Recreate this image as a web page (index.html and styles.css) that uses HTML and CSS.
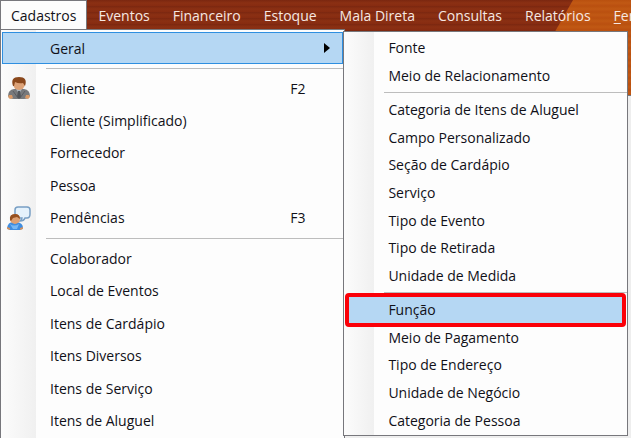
FILE: index.html
```
<!DOCTYPE html>
<html lang="pt-BR">
<head>
<meta charset="UTF-8">
<meta name="viewport" content="width=device-width, initial-scale=1.0">
<title>Cadastros</title>
<link rel="stylesheet" href="styles.css">
</head>
<body>

<header class="app-header">
  <nav class="menubar">
    <button class="active">Cadastros</button>
    <button>Eventos</button>
    <button>Financeiro</button>
    <button>Estoque</button>
    <button>Mala Direta</button>
    <button>Consultas</button>
    <button>Relatórios</button>
    <button><u>F</u>er</button>
  </nav>
</header>

<div class="dropdowns">
  <!-- Menu Cadastros -->
  <div class="menu main-menu">
    <div class="group single">
      <button class="item selected"><span>Geral</span><svg class="arrow" viewBox="0 0 6 10"><path d="M0 0L6 5L0 10Z"/></svg></button>
    </div>
    <hr>
    <div class="group five">
      <button class="item">
        <svg class="icon" viewBox="0 0 24 24">
          <path d="M1 20Q1 14 7 13L17 13Q23 14 23 20Q22 23 17 23H7Q2 23 1 20Z" fill="#77797c"/>
          <path d="M2 19Q0 21 3 23L6 22L5 19ZM22 19Q24 21 21 23L18 22L19 19Z" fill="#d99a67"/>
          <path d="M9 13L12 18L15 13Z" fill="#a9b2bb"/>
          <path d="M11 15H13L14 21L12 23L10 21Z" fill="#505358"/>
          <path d="M6 15L11 22M18 15L13 22" stroke="#5a5c61" fill="none"/>
          <ellipse cx="12" cy="8" rx="6" ry="6" fill="#dda277"/>
          <path d="M6 10Q3 1 12 1Q21 1 18 10L16 7Q12 8 8 6L7 10Z" fill="#8a481c"/>
        </svg>
        <span>Cliente</span><kbd>F2</kbd>
      </button>
      <button class="item"><span>Cliente (Simplificado)</span></button>
      <button class="item"><span>Fornecedor</span></button>
      <button class="item"><span>Pessoa</span></button>
      <button class="item">
        <svg class="icon" viewBox="0 0 24 24">
          <path d="M11 1H20Q23 1 23 4V8Q23 12 20 12H18Q17 15 13 15Q15 13 15 12H11Q8 11 8 8V4Q8 1 11 1Z" fill="#e5f2fc" stroke="#789fc4" stroke-width="1.5"/>
          <path d="M0 22Q1 16 6 16H10Q16 17 16 22Q14 25 8 24Q2 25 0 22Z" fill="#3f8de0"/>
          <path d="M3 18Q7 21 12 18L10 23H6Z" fill="#76b8f5"/>
          <path d="M0 21L3 22V24L0 23ZM16 21L13 22V24L16 23Z" fill="#d39361"/>
          <ellipse cx="8" cy="13" rx="5" ry="5" fill="#dda073"/>
          <path d="M3 14Q2 8 8 8Q13 8 13 13L10 11L6 12L4 15Z" fill="#965020"/>
        </svg>
        <span>Pendências</span><kbd>F3</kbd>
      </button>
    </div>
    <hr>
    <div class="group six">
      <button class="item"><span>Colaborador</span></button>
      <button class="item"><span>Local de Eventos</span></button>
      <button class="item"><span>Itens de Cardápio</span></button>
      <button class="item"><span>Itens Diversos</span></button>
      <button class="item"><span>Itens de Serviço</span></button>
      <button class="item"><span>Itens de Aluguel</span></button>
    </div>
  </div>

  <!-- Submenu Geral -->
  <div class="menu sub-menu">
    <div class="group two">
      <button class="item"><span>Fonte</span></button>
      <button class="item"><span>Meio de Relacionamento</span></button>
    </div>
    <hr>
    <div class="group seven">
      <button class="item"><span>Categoria de Itens de Aluguel</span></button>
      <button class="item"><span>Campo Personalizado</span></button>
      <button class="item"><span>Seção de Cardápio</span></button>
      <button class="item"><span>Serviço</span></button>
      <button class="item"><span>Tipo de Evento</span></button>
      <button class="item"><span>Tipo de Retirada</span></button>
      <button class="item"><span>Unidade de Medida</span></button>
    </div>
    <hr>
    <div class="group five">
      <button class="item marked"><span>Função</span></button>
      <button class="item"><span>Meio de Pagamento</span></button>
      <button class="item"><span>Tipo de Endereço</span></button>
      <button class="item"><span>Unidade de Negócio</span></button>
      <button class="item"><span>Categoria de Pessoa</span></button>
    </div>
  </div>
</div>

</body>
</html>
```
FILE: styles.css
```
* {
  box-sizing: border-box;
}
body {
  margin: 0;
  min-height: 100vh;
  overflow: hidden;
  position: relative;
  background: #eeeeee;
  font-family: "Open Sans", "Noto Sans", sans-serif;
  font-size: 14px;
  color: #101018;
}
button {
  font: inherit;
  color: inherit;
  background: none;
  border: none;
  margin: 0;
  padding: 0;
  text-align: left;
  white-space: nowrap;
}
.app-header {
  position: relative;
  height: 96px;
  overflow: hidden;
  background: repeating-linear-gradient(#7b2710 0, #8b3013 3px, #862b11 6px);
  border-bottom: 1px solid #77777c;
}
/* orange part of the banner */
.app-header::after {
  content: "";
  position: absolute;
  top: 0;
  right: 0;
  width: 112px;
  height: 95px;
  background: repeating-linear-gradient(#b9500f 0, #c15914 3px, #ba4f10 6px);
  clip-path: polygon(54px 0, 100% 0, 100% 100%, 0 100%);
}
.menubar {
  position: relative;
  z-index: 1;
  display: flex;
  height: 30px;
  color: #f6e8e2;
}
.menubar button {
  flex: none;
  padding: 0 12px 0 11px;
}
.menubar .active {
  background: #fcfcfc;
  color: #101018;
  border: 1px solid #77777c;
  border-width: 1px 1px 0;
  padding: 0 10px;
}
.menubar u {
  text-underline-offset: 2px;
}

.dropdowns {
  position: absolute;
  z-index: 2;
  top: 29px;
  left: 0;
  right: 3px;
  display: grid;
  grid-template-columns: 55% 1fr;
  align-items: start;
}
.menu {
  border: 1px solid #77777c;
  background: #fdfdfd;
}
.main-menu {
  padding: 2px 1px;
  background: linear-gradient(90deg, #fcfcfc, #f0f0f0) left / 35px 100% no-repeat #fdfdfd;
}
.sub-menu {
  margin-top: 2px;
  margin-left: -2px;
  padding: 2px 4px 1px;
  background: linear-gradient(90deg, #fcfcfc, #f0f0f0) left / 30px 100% no-repeat #fdfdfd;
}
.menu hr {
  border: none;
  height: 1px;
  background: #bdbdbd;
  margin: 4px 0 3px 44px;
}
.sub-menu hr {
  margin: 3px -4px 3px 36px;
}

/* rows share the height of their group */
.group {
  display: grid;
  grid-auto-rows: 1fr;
}
.main-menu .single { height: 32px; }
.main-menu .five { height: 162px; }
.main-menu .six { height: 195px; }
.sub-menu .two { height: 55px; }
.sub-menu .seven { height: 193px; }
.sub-menu .five { height: 138px; }

.item {
  display: flex;
  align-items: center;
  width: 100%;
  position: relative;
}
.main-menu .item {
  padding: 0 12px 0 48px;
}
.sub-menu .item {
  padding-left: 40px;
}
.main-menu .selected {
  background: #b5d7f3;
  border: 1px solid #2f8fe0;
  padding-left: 47px;
}
.sub-menu .marked {
  background: #b5d7f3;
  outline: 4px solid #fb0008;
  outline-offset: -1px;
  border-radius: 1px;
}
.icon {
  position: absolute;
  left: 5px;
  width: 24px;
  height: 24px;
}
.arrow {
  width: 6px;
  height: 10px;
  margin-left: auto;
}
.item kbd {
  font: inherit;
  margin-left: auto;
  margin-right: 26px;
}
```
